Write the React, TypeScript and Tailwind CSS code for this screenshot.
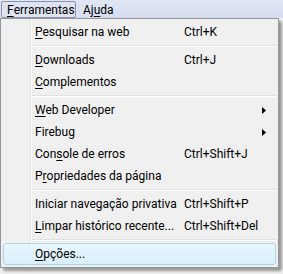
import React from 'react';

type Item =
  | { kind: 'sep' }
  | { kind: 'item'; label: string; key: number; shortcut?: string; submenu?: boolean; active?: boolean };

const items: Item[] = [
  { kind: 'item', label: 'Pesquisar na web', key: 0, shortcut: 'Ctrl+K' },
  { kind: 'sep' },
  { kind: 'item', label: 'Downloads', key: 0, shortcut: 'Ctrl+J' },
  { kind: 'item', label: 'Complementos', key: 0 },
  { kind: 'sep' },
  { kind: 'item', label: 'Web Developer', key: 0, submenu: true },
  { kind: 'item', label: 'Firebug', key: -1, submenu: true },
  { kind: 'item', label: 'Console de erros', key: 3, shortcut: 'Ctrl+Shift+J' },
  { kind: 'item', label: 'Propriedades da página', key: 1 },
  { kind: 'sep' },
  { kind: 'item', label: 'Iniciar navegação privativa', key: -1, shortcut: 'Ctrl+Shift+P' },
  { kind: 'item', label: 'Limpar histórico recente...', key: 0, shortcut: 'Ctrl+Shift+Del' },
  { kind: 'sep' },
  { kind: 'item', label: 'Opções...', key: 0, active: true },
];

function Mnemonic({ text, index }: { text: string; index: number }) {
  if (index < 0) return <>{text}</>;
  return (
    <>
      {text.slice(0, index)}
      <span className="underline underline-offset-2">{text[index]}</span>
      {text.slice(index + 1)}
    </>
  );
}

function MenuRow({ item }: { item: Extract<Item, { kind: 'item' }> }) {
  return (
    <div
      className={`relative mx-[2px] flex h-[22px] items-center rounded-[3px] border ${
        item.active
          ? 'border-[#a8d8eb] bg-linear-to-b from-[#eaf6fd] to-[#d9effc]'
          : 'border-transparent'
      }`}
    >
      <span className="w-[180px] shrink-0 whitespace-nowrap pl-[31px]">
        <Mnemonic text={item.label} index={item.key} />
      </span>
      {item.shortcut && <span className="whitespace-nowrap">{item.shortcut}</span>}
      {item.submenu && (
        <svg className="absolute right-[9px] top-[7px]" width="4" height="7" viewBox="0 0 4 7">
          <path d="M0 0 L4 3.5 L0 7 Z" fill="#000" />
        </svg>
      )}
    </div>
  );
}

export default function App() {
  return (
    <div
      className="h-[274px] w-[283px] overflow-hidden bg-[#f5f5f5] text-[12px] leading-none text-black"
      style={{ fontFamily: '"Segoe UI", Roboto, sans-serif' }}
    >
      <div className="flex h-[18px] items-start bg-linear-to-b from-[#dfe6f4] to-[#d6ddef] pt-[1px]">
        <div className="ml-[1px] flex h-[17px] w-[75px] items-center rounded-[2px] border border-[#8b96ad] bg-[#dde3f1] pl-[5px]">
          <Mnemonic text="Ferramentas" index={0} />
        </div>
        <div className="flex h-[17px] items-center pl-[7px]">
          <Mnemonic text="Ajuda" index={2} />
        </div>
      </div>

      <div className="relative w-[279px] border border-[#979797] bg-[#f0f0f0] py-[2px] shadow-[3px_3px_3px_rgba(0,0,0,0.4)]">
        <div className="absolute bottom-0 left-[29px] top-0 w-[2px] border-l border-[#e2e3e3] bg-white" />
        {items.map((it, i) =>
          it.kind === 'sep' ? (
            <div key={i} className="relative flex h-[6px] flex-col justify-center pl-[31px] pr-[2px]">
              <div className="h-px bg-[#e0e0e0]" />
              <div className="h-px bg-white" />
            </div>
          ) : (
            <MenuRow key={i} item={it} />
          )
        )}
      </div>
    </div>
  );
}
